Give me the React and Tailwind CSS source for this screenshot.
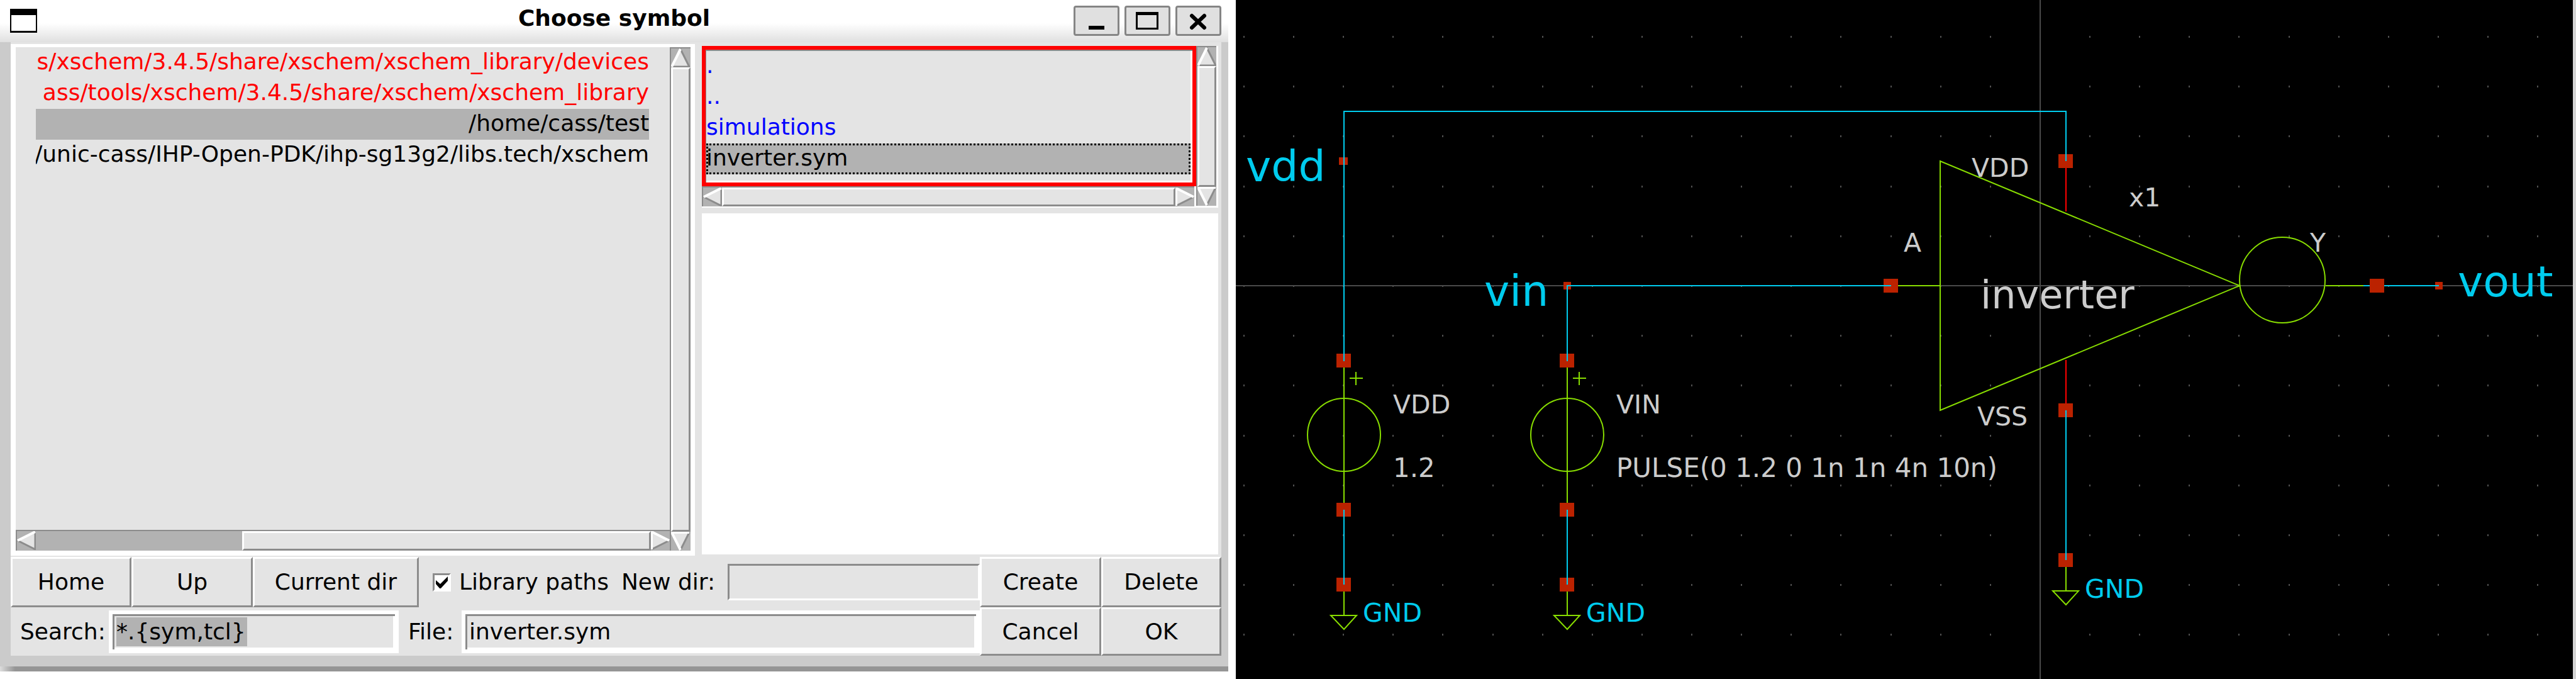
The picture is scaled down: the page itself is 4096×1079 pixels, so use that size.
import { Fragment } from "react";

const LIBRARY_PATHS = [
  { path: "s/xschem/3.4.5/share/xschem/xschem_library/devices", tone: "text-[#ff0000]" },
  { path: "ass/tools/xschem/3.4.5/share/xschem/xschem_library", tone: "text-[#ff0000]" },
  { path: "/home/cass/test", tone: "bg-[#b2b2b2] text-black", selected: true },
  { path: "/unic-cass/IHP-Open-PDK/ihp-sg13g2/libs.tech/xschem", tone: "text-black" },
];

const FILES = [
  { name: ".", tone: "text-[#0000ff]" },
  { name: "..", tone: "text-[#0000ff]" },
  { name: "simulations", tone: "text-[#0000ff]" },
  {
    name: "inverter.sym",
    tone: "bg-[#b2b2b2] text-black outline-3 -outline-offset-3 outline-dotted outline-black",
    selected: true,
  },
];

const ARROWS = {
  up: { fill: "15,1 29,29 1,29", light: "1,29 15,1", dark: "15,1 29,29 1,29" },
  down: { fill: "1,1 29,1 15,29", light: "29,1 1,1 15,29", dark: "15,29 29,1" },
  left: { fill: "29,1 29,29 1,15", light: "1,15 29,1", dark: "29,1 29,29 1,15" },
  right: { fill: "1,1 29,15 1,29", light: "1,29 1,1 29,15", dark: "29,15 1,29" },
};

function Arrow({ dir }) {
  const a = ARROWS[dir];
  return (
    <button type="button" aria-label={`Scroll ${dir}`} className="size-[30px] shrink-0">
      <svg viewBox="0 0 30 30" className="block size-full">
        <polygon points={a.fill} fill="#e4e4e4" />
        <polyline points={a.dark} fill="none" stroke="#8c8c8c" strokeWidth="3" />
        <polyline points={a.light} fill="none" stroke="#ffffff" strokeWidth="4" />
      </svg>
    </button>
  );
}

const THUMB =
  "flex-1 border-[3px] border-t-white border-l-white border-r-[#8c8c8c] border-b-[#8c8c8c] bg-[#e4e4e4]";

function VScroll() {
  return (
    <div className="flex flex-col border-t-2 border-l-2 border-[#8c8c8c] bg-[#b2b2b2]">
      <Arrow dir="up" />
      <div className={THUMB} />
      <Arrow dir="down" />
    </div>
  );
}

function HScroll({ offset = "" }) {
  return (
    <div className="flex border-t-2 border-l-2 border-[#8c8c8c] bg-[#b2b2b2]">
      <Arrow dir="left" />
      <div className={offset} />
      <div className={THUMB} />
      <Arrow dir="right" />
    </div>
  );
}

function PushButton({ className = "", children }) {
  return (
    <button
      type="button"
      className={`border-[3px] border-t-white border-l-white border-r-[#8c8c8c] border-b-[#8c8c8c] bg-[#e4e4e4] ${className}`}
    >
      {children}
    </button>
  );
}

function TitleButton({ label, children }) {
  return (
    <button
      type="button"
      aria-label={label}
      className="h-12 w-[73px] rounded-[4px] border-[3px] border-[#858585] bg-[#e0e0e0]"
    >
      <svg viewBox="3 3 67 42" className="block size-full">
        {children}
      </svg>
    </button>
  );
}

function ChooseSymbol() {
  return (
    <section className="flex w-[47.68%] flex-col pb-3 text-[36px] text-black">
      <header className="grid h-[67px] shrink-0 grid-cols-[1fr_auto_1fr] items-start bg-linear-to-b from-white from-55% to-[#e0e0e0] px-[11px]">
        <button
          type="button"
          aria-label="Window menu"
          className="mt-[14px] ml-[5px] h-[38px] w-[43px] border-2 border-t-[10px] border-b-[3px] border-black bg-white"
        />
        <h1 className="mt-[6px] leading-[46px] font-bold">Choose symbol</h1>
        <div className="mt-[9px] flex justify-end gap-2">
          <TitleButton label="Minimize">
            <rect x="24" y="32" width="25" height="6" />
          </TitleButton>
          <TitleButton label="Maximize">
            <path d="M18 10h36v28H18zM21 15v20h30V15z" fillRule="evenodd" />
          </TitleButton>
          <TitleButton label="Close">
            <path d="M26 16L46 35M46 16L26 35" stroke="#000" strokeWidth="6" strokeLinecap="round" />
          </TitleButton>
        </div>
      </header>

      <div className="flex min-h-0 flex-1 flex-col border-r-[11px] border-b-[17px] border-l-[17px] border-[#cbcbcb] bg-[#e4e4e4]">
        <div className="flex min-h-0 flex-1 gap-[11px] pt-[3px] pr-[5px]">
          <div className="grid w-[1088px] grid-cols-[minmax(0,1fr)_33px] grid-rows-[minmax(0,1fr)_33px] bg-white pt-[5px] pr-[7px] pb-2 pl-2">
            <ul role="listbox" aria-label="Library paths" className="bg-[#e4e4e4] pr-[33px] pl-8">
              {LIBRARY_PATHS.map((row) => (
                <li
                  key={row.path}
                  role="option"
                  aria-selected={!!row.selected}
                  className={`flex justify-end overflow-hidden pb-[3px] leading-[46px] whitespace-nowrap ${row.tone}`}
                >
                  {row.path}
                </li>
              ))}
            </ul>
            <div className="row-span-2 grid">
              <VScroll />
            </div>
            <HScroll offset="w-[328px]" />
          </div>

          <div className="flex min-w-0 flex-1 flex-col gap-[9px] pt-[3px] pb-[2px]">
            <div className="grid grid-cols-[minmax(0,1fr)_35px] grid-rows-[223px_34px]">
              <ul
                role="listbox"
                aria-label="Symbols"
                className="border-[6px] border-[#ff0000] bg-[#e4e4e4] pt-[2px] pr-[3px] pl-px shadow-[inset_1px_2px_0_#8c8c8c,inset_-3px_-3px_0_#ffffff]"
              >
                {FILES.map((row) => (
                  <li
                    key={row.name}
                    role="option"
                    aria-selected={!!row.selected}
                    className={`pb-[3px] leading-[46px] ${row.tone}`}
                  >
                    {row.name}
                  </li>
                ))}
              </ul>
              <div className="row-span-2 grid border-r-[3px] border-b-[3px] border-white">
                <VScroll />
              </div>
              <div className="grid border-r-[3px] border-b-[3px] border-white">
                <HScroll />
              </div>
            </div>
            <div className="flex-1 bg-white" />
          </div>
        </div>

        <form className="mt-[2px] grid shrink-0 grid-cols-[minmax(0,1fr)_193px_191px] grid-rows-[80px_77px]">
          <div className="flex items-stretch">
            <PushButton className="w-[192px]">Home</PushButton>
            <PushButton className="w-[193px]">Up</PushButton>
            <PushButton className="w-[264px]">Current dir</PushButton>
            <label className="ml-[22px] flex items-center gap-[13px] whitespace-nowrap">
              <span className="grid size-[29px] place-items-center border-[3px] border-t-[#8c8c8c] border-r-white border-b-white border-l-[#8c8c8c] bg-white">
                <input type="checkbox" defaultChecked className="peer col-start-1 row-start-1 size-full appearance-none" />
                <svg
                  viewBox="0 0 20 20"
                  className="pointer-events-none invisible col-start-1 row-start-1 size-5 peer-checked:visible"
                >
                  <path d="M0 7v6l7 8L19 8V1L7 13z" />
                </svg>
              </span>
              Library paths
            </label>
            <label htmlFor="new-dir" className="ml-[20px] self-center whitespace-nowrap">
              New dir:
            </label>
            <input
              id="new-dir"
              type="text"
              className="ml-auto h-[58px] w-[401px] self-center border-[3px] border-t-[#8c8c8c] border-r-white border-b-white border-l-[#8c8c8c] bg-[#e4e4e4]"
            />
          </div>
          <PushButton>Create</PushButton>
          <PushButton>Delete</PushButton>

          <div className="flex items-center">
            <label htmlFor="search" className="w-[156px] shrink-0 pl-[15px] whitespace-nowrap">
              Search:
            </label>
            <div className="h-[68px] w-[461px] border-[6px] border-white bg-[#e4e4e4] py-[5px] pl-[6px] shadow-[inset_3px_3px_0_#8c8c8c,inset_-3px_-3px_0_#ffffff]">
              <input
                id="search"
                type="text"
                defaultValue="*.{sym,tcl}"
                className="block h-[46px] w-[208px] bg-[#b2b2b2]"
              />
            </div>
            <label htmlFor="file" className="w-[100px] shrink-0 pl-[15px] whitespace-nowrap">
              File:
            </label>
            <div className="h-[68px] flex-1 border-[6px] border-white bg-[#e4e4e4] py-[5px] pl-[6px] shadow-[inset_3px_3px_0_#8c8c8c,inset_-3px_-3px_0_#ffffff]">
              <input
                id="file"
                type="text"
                defaultValue="inverter.sym"
                className="block h-[46px] w-full bg-transparent pr-2"
              />
            </div>
          </div>
          <PushButton>Cancel</PushButton>
          <PushButton>OK</PushButton>
        </form>
      </div>
      <div className="h-2 shrink-0 bg-linear-to-r from-[#dddddd] to-[#959595] to-[24px]" />
    </section>
  );
}

const WIRE = "#00ccee";
const CROSSHAIR = "#4a4a4a";
const SYMBOL = "#88dd00";
const PIN = "#bb2200";
const TEXT = "#cccccc";

const GRID_COLS = Array.from({ length: 27 }, (_, i) => 13 + Math.round(i * 79.12));
const GRID_ROWS = Array.from({ length: 13 }, (_, i) => 58 + Math.round(i * 79.2));

function Pin({ x, y, w = 23, h = 22 }) {
  return (
    <rect
      x={x - Math.floor(w / 2) - 1}
      y={y - Math.floor(h / 2)}
      width={w}
      height={h}
      fill={PIN}
      stroke="none"
    />
  );
}

function Ground({ x, y, labelX, labelY }) {
  return (
    <g fill="none" stroke={SYMBOL} strokeWidth="2">
      <path d={`M${x} ${y}V${y + 49}M${x - 21} ${y + 49}H${x + 20}L${x} ${y + 71}Z`} />
      <Pin x={x} y={y} />
      <text x={labelX} y={labelY} fill={WIRE} stroke="none" fontSize="41">
        GND
      </text>
    </g>
  );
}

function Source({ x, name, value }) {
  return (
    <Fragment>
      <g fill="none" stroke={SYMBOL} strokeWidth="2">
        <path d={`M${x} 573V810M${x + 9} 601H${x + 30}M${x + 19} 591V612`} />
        <circle cx={x} cy="691" r="58" />
      </g>
      <Ground x={x} y={929} labelX={x + 30} labelY={988} />
      <Pin x={x} y={573} />
      <Pin x={x} y={810} />
      <path d={`M${x} 810V929`} stroke={WIRE} strokeWidth="2" />
      <g fill={TEXT}>
        <text x={x + 78} y="657" fontSize="41">
          {name}
        </text>
        <text x={x + 78} y="758" fontSize="42">
          {value}
        </text>
      </g>
    </Fragment>
  );
}

function Schematic() {
  return (
    <section aria-label="Schematic" className="min-w-0 flex-1 border-r-[5px] border-[#d4d4d4] bg-black">
      <svg viewBox="0 0 2126 1079" className="block size-full font-['DejaVu_Sans',sans-serif]">
        <g fill="#505050">
          {GRID_COLS.map((x) =>
            GRID_ROWS.map((y) => <rect key={`${x}-${y}`} x={x - 1} y={y - 1} width="2" height="3" />)
          )}
        </g>
        <path d="M0 454H2126M1279 0V1079" stroke={CROSSHAIR} strokeWidth="2" />

        <g fill={TEXT} fontSize="41">
          <text x="1170" y="281">VDD</text>
          <text x="1179" y="676">VSS</text>
          <text x="1420" y="328">x1</text>
          <text x="1062" y="400">A</text>
          <text x="1708" y="400">Y</text>
          <text x="1184" y="490" fontSize="62">inverter</text>
        </g>

        <g fill="none" stroke={SYMBOL} strokeWidth="2">
          <path d="M1120 256V652L1596 454ZM1042 454H1120M1733 454H1814" />
          <circle cx="1664" cy="445" r="68" />
        </g>
        <path d="M1320 256V336M1320 572V652" stroke="#ff0000" strokeWidth="2" />

        <Source x={172} name="VDD" value="1.2" />
        <Source x={527} name="VIN" value="PULSE(0 1.2 0 1n 1n 4n 10n)" />
        <Ground x={1320} y={890} labelX={1350} labelY={950} />

        <Pin x={1320} y={256} />
        <Pin x={1320} y={652} />
        <Pin x={1042} y={454} />
        <Pin x={172} y={256} w={14} h={12} />
        <Pin x={528} y={454} w={12} h={12} />
        <Pin x={1914} y={454} w={12} h={12} />

        <path
          d="M172 574V177H1320V256M527 574V454H1042M1320 652V890M1793 454H1913"
          fill="none"
          stroke={WIRE}
          strokeWidth="2"
        />
        <Pin x={1815} y={454} />

        <g fill={WIRE} fontSize="68">
          <text x="16" y="288">vdd</text>
          <text x="395" y="486">vin</text>
          <text x="1943" y="471">vout</text>
        </g>
      </svg>
    </section>
  );
}

export default function App() {
  return (
    <main className="flex h-screen gap-3 overflow-hidden bg-white font-['DejaVu_Sans',sans-serif]">
      <ChooseSymbol />
      <Schematic />
    </main>
  );
}
